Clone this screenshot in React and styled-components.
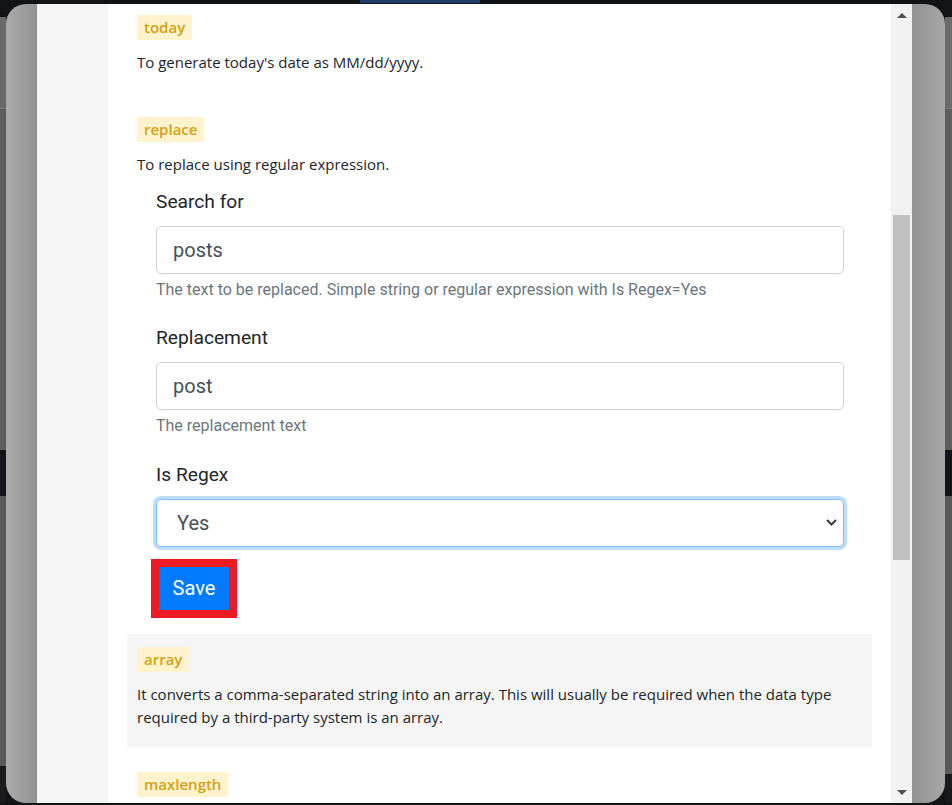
import styled, { createGlobalStyle } from "styled-components";

const GlobalStyle = createGlobalStyle`
  html, body {
    margin: 0;
    padding: 0;
  }
  body {
    width: 952px;
    height: 805px;
    overflow: hidden;
    background: #121316;
    font-family: "Open Sans", "Liberation Sans", sans-serif;
  }
  * {
    box-sizing: border-box;
  }
`;

const Screen = styled.div`
  width: 952px;
  height: 805px;
  display: flex;
  flex-direction: column;
  background: #121316;
`;

const TopStrip = styled.div`
  height: 4px;
  display: flex;
`;

const TopTab = styled.div`
  margin-left: 360px;
  width: 120px;
  height: 3px;
  background: #1d3a68;
`;

const Stage = styled.div`
  height: 799px;
  display: flex;
`;

const Strip = styled.div`
  width: ${(p) => p.$width}px;
  display: flex;
  flex-direction: column;
  overflow: hidden;
`;

const Segment = styled.div`
  height: ${(p) => p.$h}px;
  background: ${(p) => p.$bg};
  flex-shrink: 0;
`;

const Frame = styled.div`
  flex: 1;
  display: flex;
  padding: 0 33px 0 31px;
  border-radius: 20px;
  background: linear-gradient(
    to right,
    #ababab 0,
    #929292 31px,
    #929292 calc(100% - 33px),
    #a7a7a7 100%
  );
  overflow: hidden;
`;

const Content = styled.div`
  flex: 1;
  display: flex;
  overflow: hidden;
`;

const Gutter = styled.div`
  width: 71px;
  background: #f5f5f5;
`;

const Main = styled.div`
  flex: 1;
  background: #fff;
  padding: 0 19px;
  overflow: hidden;
`;

const List = styled.div`
  margin-top: -2px;
  display: flex;
  flex-direction: column;
  gap: 12px;
`;

const Item = styled.div`
  padding: 13px 10px 12px;
  background: ${(p) => (p.$active ? "#f5f5f5" : "transparent")};
`;

const Badge = styled.span`
  display: inline-block;
  height: 25px;
  line-height: 25px;
  padding: 0 7px;
  border-radius: 2px;
  background: #fff3cd;
  color: #d4a017;
  font-size: 15px;
  font-weight: 600;
`;

const Desc = styled.p`
  margin: 11px 0 6px;
  font-size: 15px;
  line-height: 23px;
  color: #212529;
`;

const Form = styled.div`
  margin: 10.5px 18px 0 19px;
  font-family: Roboto, "Liberation Sans", sans-serif;
`;

const Group = styled.div`
  margin-bottom: ${(p) => p.$mb}px;
`;

const Label = styled.label`
  display: block;
  font-size: 19.2px;
  line-height: 29px;
  margin-bottom: 10px;
  color: #212529;
`;

const Field = styled.input`
  display: block;
  width: 100%;
  height: 48px;
  padding: 0 16px;
  font-family: Roboto, "Liberation Sans", sans-serif;
  font-size: 20px;
  color: #495057;
  background: #fff;
  border: 1px solid #ced4da;
  border-radius: 5px;
  outline: none;
`;

const Help = styled.small`
  display: block;
  margin-top: 4px;
  font-size: 16px;
  line-height: 24px;
  color: #6c757d;
`;

const SelectWrap = styled.div`
  position: relative;
`;

const Select = styled.select`
  display: block;
  width: 100%;
  height: 48px;
  padding: 0 20px;
  appearance: none;
  font-family: Roboto, "Liberation Sans", sans-serif;
  font-size: 20px;
  color: #495057;
  background: #fff;
  border: 1px solid #80bdff;
  border-radius: 5px;
  box-shadow: 0 0 0 3px rgba(0, 123, 255, 0.25);
  outline: none;
`;

const Chevron = styled.svg`
  position: absolute;
  right: 7px;
  top: 20px;
  pointer-events: none;
`;

const SaveButton = styled.button`
  display: block;
  margin-left: 3px;
  width: 70px;
  height: 43px;
  padding: 0;
  font-family: Roboto, "Liberation Sans", sans-serif;
  font-size: 20px;
  line-height: 43px;
  color: #fff;
  background: #007bff;
  border: none;
  border-radius: 0;
  outline: 8px solid #ed1c24;
`;

const Scrollbar = styled.div`
  width: 21px;
  background: #f1f1f1;
  display: flex;
  flex-direction: column;
`;

const ArrowBox = styled.div`
  height: 22px;
  display: flex;
  align-items: center;
  justify-content: center;
`;

const Arrow = styled.div`
  width: 0;
  height: 0;
  border-left: 5px solid transparent;
  border-right: 5px solid transparent;
  ${(p) =>
    p.$up
      ? "border-bottom: 5px solid #505050;"
      : "border-top: 5px solid #505050;"}
`;

const Track = styled.div`
  flex: 1;
  padding: 0 2px;
`;

const Thumb = styled.div`
  margin-top: 189px;
  height: 345px;
  background: #c1c1c1;
`;

const BottomStrip = styled.div`
  height: 2px;
  background: #121316;
`;

const leftSegments = [
  [13, "#121316"],
  [91, "#6a6a6a"],
  [1, "#7c7c7c"],
  [341, "#5e5e5e"],
  [46, "#141518"],
  [270, "#5b5b5b"],
  [40, "#1a1b1d"],
];

const rightSegments = [
  [13, "#121316"],
  [91, "#6a6a6a"],
  [1, "#7c7c7c"],
  [341, "#5e5e5e"],
  [46, "#141518"],
  [278, "#5b5b5b"],
  [30, "#1a1b1d"],
];

const SideStrip = ({ width, segments }) => (
  <Strip $width={width}>
    {segments.map(([h, bg], i) => (
      <Segment key={i} $h={h} $bg={bg} />
    ))}
  </Strip>
);

const FieldGroup = ({ label, value, help }) => (
  <Group $mb={21.5}>
    <Label>{label}</Label>
    <Field defaultValue={value} readOnly />
    <Help>{help}</Help>
  </Group>
);

const App = () => {
  return (
    <Screen>
      <GlobalStyle />
      <TopStrip>
        <TopTab />
      </TopStrip>
      <Stage>
        <SideStrip width={6} segments={leftSegments} />
        <Frame>
          <Content>
            <Gutter />
            <Main>
              <List>
                <Item>
                  <Badge>today</Badge>
                  <Desc>To generate today's date as MM/dd/yyyy.</Desc>
                </Item>
                <Item>
                  <Badge>replace</Badge>
                  <Desc>To replace using regular expression.</Desc>
                  <Form>
                    <FieldGroup
                      label="Search for"
                      value="posts"
                      help="The text to be replaced. Simple string or regular expression with Is Regex=Yes"
                    />
                    <FieldGroup
                      label="Replacement"
                      value="post"
                      help="The replacement text"
                    />
                    <Group $mb={20}>
                      <Label>Is Regex</Label>
                      <SelectWrap>
                        <Select defaultValue="Yes">
                          <option>Yes</option>
                          <option>No</option>
                        </Select>
                        <Chevron width="11" height="7" viewBox="0 0 11 7">
                          <path
                            d="M1 1l4.5 4.5L10 1"
                            fill="none"
                            stroke="#343a40"
                            strokeWidth="2"
                          />
                        </Chevron>
                      </SelectWrap>
                    </Group>
                    <SaveButton>Save</SaveButton>
                  </Form>
                </Item>
                <Item $active>
                  <Badge>array</Badge>
                  <Desc>
                    It converts a comma-separated string into an array. This will
                    usually be required when the data type required by a
                    third-party system is an array.
                  </Desc>
                </Item>
                <Item>
                  <Badge>maxlength</Badge>
                  <Desc>
                    It truncates the value to the given maximum number of
                    characters.
                  </Desc>
                </Item>
              </List>
            </Main>
          </Content>
          <Scrollbar>
            <ArrowBox>
              <Arrow $up />
            </ArrowBox>
            <Track>
              <Thumb />
            </Track>
            <ArrowBox>
              <Arrow />
            </ArrowBox>
          </Scrollbar>
        </Frame>
        <SideStrip width={7} segments={rightSegments} />
      </Stage>
      <BottomStrip />
    </Screen>
  );
};

export default App;
